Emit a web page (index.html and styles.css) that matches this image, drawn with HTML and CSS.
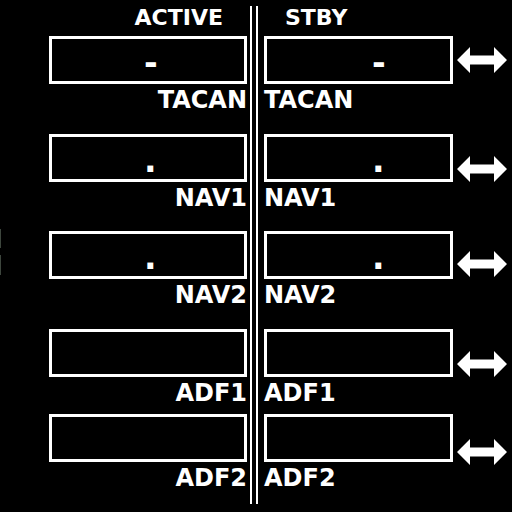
FILE: index.html
```html
<!DOCTYPE html>
<html>
<head>
<meta charset="utf-8">
<link rel="stylesheet" href="styles.css">
</head>
<body>
<div class="panel">
  <div class="edge"><span class="mark m1"></span><span class="mark m2"></span></div>
  <div class="col active">
    <div class="head">ACTIVE</div>
    <div class="entry"><div class="box"><span class="val dash">-</span></div><div class="label">TACAN</div></div>
    <div class="entry near"><div class="box"><span class="val">.</span></div><div class="label">NAV1</div></div>
    <div class="entry"><div class="box"><span class="val">.</span></div><div class="label">NAV2</div></div>
    <div class="entry close"><div class="box"><span class="val"></span></div><div class="label">ADF1</div></div>
    <div class="entry"><div class="box"><span class="val"></span></div><div class="label">ADF2</div></div>
  </div>
  <div class="divider"></div>
  <div class="col stby">
    <div class="head">STBY</div>
    <div class="entry"><div class="box"><span class="val dash">-</span></div><div class="label">TACAN</div></div>
    <div class="entry near"><div class="box"><span class="val">.</span></div><div class="label">NAV1</div></div>
    <div class="entry"><div class="box"><span class="val">.</span></div><div class="label">NAV2</div></div>
    <div class="entry close"><div class="box"><span class="val"></span></div><div class="label">ADF1</div></div>
    <div class="entry"><div class="box"><span class="val"></span></div><div class="label">ADF2</div></div>
  </div>
  <div class="col swaps">
    <svg class="sw s1" viewBox="0 0 50 26" width="50" height="26"><path d="M0 13 L13 0 L13 8.5 L37 8.5 L37 0 L50 13 L37 26 L37 17.5 L13 17.5 L13 26 Z" fill="#fff"/></svg>
    <svg class="sw s2" viewBox="0 0 50 26" width="50" height="26"><path d="M0 13 L13 0 L13 8.5 L37 8.5 L37 0 L50 13 L37 26 L37 17.5 L13 17.5 L13 26 Z" fill="#fff"/></svg>
    <svg class="sw s3" viewBox="0 0 50 26" width="50" height="26"><path d="M0 13 L13 0 L13 8.5 L37 8.5 L37 0 L50 13 L37 26 L37 17.5 L13 17.5 L13 26 Z" fill="#fff"/></svg>
    <svg class="sw s4" viewBox="0 0 50 26" width="50" height="26"><path d="M0 13 L13 0 L13 8.5 L37 8.5 L37 0 L50 13 L37 26 L37 17.5 L13 17.5 L13 26 Z" fill="#fff"/></svg>
    <svg class="sw s5" viewBox="0 0 50 26" width="50" height="26"><path d="M0 13 L13 0 L13 8.5 L37 8.5 L37 0 L50 13 L37 26 L37 17.5 L13 17.5 L13 26 Z" fill="#fff"/></svg>
  </div>
</div>
</body>
</html>
```
FILE: styles.css
```css
html, body {
  margin: 0;
  padding: 0;
  background: #000;
}
body {
  width: 512px;
  height: 512px;
  overflow: hidden;
  color: #fff;
  font-family: "DejaVu Sans", "Verdana", sans-serif;
  font-weight: bold;
}
.panel {
  display: flex;
  align-items: flex-start;
  padding-top: 6px;
}
.edge {
  width: 1px;
  display: flex;
  flex-direction: column;
  padding-top: 223px;
}
.mark {
  display: block;
  width: 1px;
  background: #3d463d;
}
.m1 { height: 19px; }
.m2 { height: 20px; margin-top: 7px; }
.col {
  display: flex;
  flex-direction: column;
}
.active {
  width: 198px;
  margin-left: 48px;
}
.stby {
  width: 189px;
}
.head {
  font-size: 22px;
  line-height: 21px;
  padding-top: 1px;
  margin-bottom: 8px;
}
.active .head {
  text-align: right;
  padding-right: 24px;
}
.stby .head {
  padding-left: 21px;
}
.entry {
  margin-bottom: 22px;
}
.entry.near { margin-bottom: 21px; }
.entry.close { margin-bottom: 9px; }
.box {
  box-sizing: border-box;
  height: 48px;
  border: 3px solid #fff;
  padding-top: 8px;
}
.active .box { padding-left: 92px; }
.stby .box { padding-left: 105px; }
.val {
  display: block;
  font-size: 33px;
  line-height: 32px;
  height: 32px;
}
.label {
  font-size: 24px;
  line-height: 23px;
  margin-top: 5px;
}
.active .label {
  text-align: right;
}
.divider {
  box-sizing: border-box;
  width: 8px;
  height: 498px;
  margin: 0 6px 0 3px;
  border-left: 2px solid #fff;
  border-right: 2px solid #fff;
}
.swaps {
  padding-left: 4px;
}
.sw { display: block; }
.s1 { margin-top: 41px; }
.s2 { margin-top: 83px; }
.s3 { margin-top: 69px; }
.s4 { margin-top: 74px; }
.s5 { margin-top: 62px; }
```
